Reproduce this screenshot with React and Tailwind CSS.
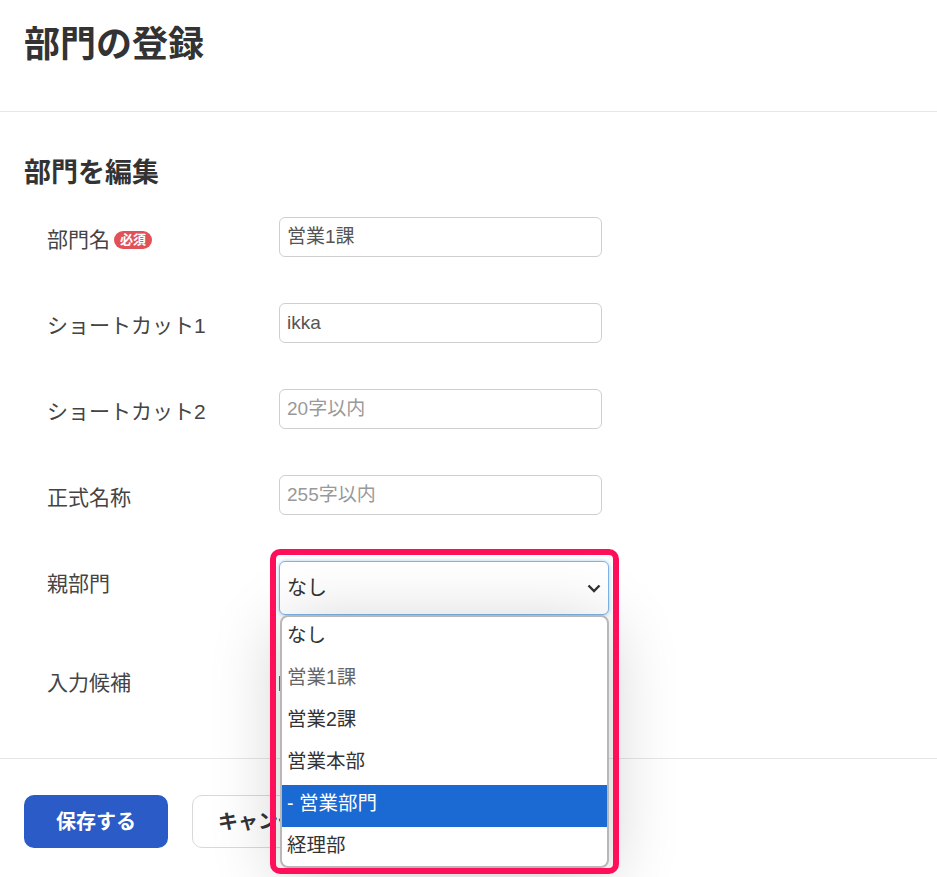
const font = 'font-["Liberation_Sans","Noto_Sans_CJK_JP",sans-serif]';

function TextInput({ value, placeholder }) {
  return (
    <div className="w-[323px] h-[40px] border border-[#cfcfcf] rounded-md bg-white flex items-center px-[7px] text-[19px]">
      {value ? (
        <span className="text-[#555]">{value}</span>
      ) : (
        <span className="text-[#999]">{placeholder}</span>
      )}
    </div>
  );
}

function Row({ label, required, children, className = '', labelPad = 'pt-[6px]' }) {
  return (
    <div className={`flex items-center ${className}`}>
      <div className={`w-[255px] pl-[23px] ${labelPad} flex items-center text-[21px] text-[#444]`}>
        {label}
        {required && (
          <span className="ml-[4px] bg-[#e05257] text-white text-[13px] font-bold leading-[18px] px-[6px] rounded-full">
            必須
          </span>
        )}
      </div>
      {children}
    </div>
  );
}

const options = ['なし', '営業1課', '営業2課', '営業本部', '- 営業部門', '経理部'];

export default function App() {
  return (
    <div className={`relative w-[937px] h-[877px] overflow-hidden bg-white ${font}`}>
      {/* Header */}
      <div className="h-[112px] border-b border-[#e6e6e6] px-6 pt-[24px]">
        <h1 className="text-[36px] leading-[42px] font-bold text-[#333]">部門の登録</h1>
      </div>

      {/* Form */}
      <div className="px-6">
        <h2 className="mt-[43px] text-[27px] leading-[36px] font-bold text-[#333]">部門を編集</h2>

        <div className="mt-[26px] flex flex-col gap-[46px]">
          <Row label="部門名" required>
            <TextInput value="営業1課" />
          </Row>
          <Row label="ショートカット1">
            <TextInput value="ikka" />
          </Row>
          <Row label="ショートカット2">
            <TextInput placeholder="20字以内" />
          </Row>
          <Row label="正式名称">
            <TextInput placeholder="255字以内" />
          </Row>
          <div className="flex items-start">
            <div className="w-[255px] pl-[23px] pt-[7px] text-[21px] text-[#444]">親部門</div>
            <div className="w-[330px] h-[54px] border border-[#7db3e8] rounded-md bg-white shadow-[0_0_4px_rgba(90,150,220,0.5)] flex items-center justify-between pl-[7px] pr-[6px] text-[20px] text-[#333]">
              <span>なし</span>
              <svg width="16" height="16" viewBox="0 0 16 16" fill="none">
                <path d="M2.5 5.5 L8 11 L13.5 5.5" stroke="#333" strokeWidth="2.4" />
              </svg>
            </div>
          </div>
          <Row label="入力候補" className="h-[44px]" labelPad="pt-0">
            <div className="w-[4px] h-[15px] bg-[#2d6fd0]" />
          </Row>
        </div>
      </div>

      {/* Footer */}
      <div className="mt-[53px] border-t border-[#e6e6e6] px-6 pt-[36px] flex gap-6">
        <button className="w-[144px] h-[53px] rounded-[10px] bg-[#2a5bc7] text-white text-[20px] font-bold">
          保存する
        </button>
        <button className="w-[150px] h-[53px] rounded-[10px] border border-[#d9d9d9] bg-white text-[#333] text-[20px] font-bold text-left pl-[25px]">
          キャンセル
        </button>
      </div>

      {/* Open dropdown list */}
      <div className="absolute left-[280px] top-[615px] w-[329px] h-[253px] border-2 border-[#b8b8b8] rounded-lg bg-white overflow-hidden shadow-[0_10px_70px_rgba(0,0,0,0.2)]">
        {options.map((o, i) => (
          <div
            key={o}
            className={`h-[42px] flex items-center pb-[4px] px-[5px] text-[19.5px] ${
              i === 4 ? 'bg-[#1b69d3] text-white' : i === 1 ? 'text-[#666]' : 'text-[#333]'
            }`}
          >
            {o}
          </div>
        ))}
      </div>

      {/* Highlight annotation */}
      <div className="absolute left-[270px] top-[549px] w-[349px] h-[325px] border-[6px] border-[#ff0f5a] rounded-[10px] pointer-events-none" />
    </div>
  );
}
